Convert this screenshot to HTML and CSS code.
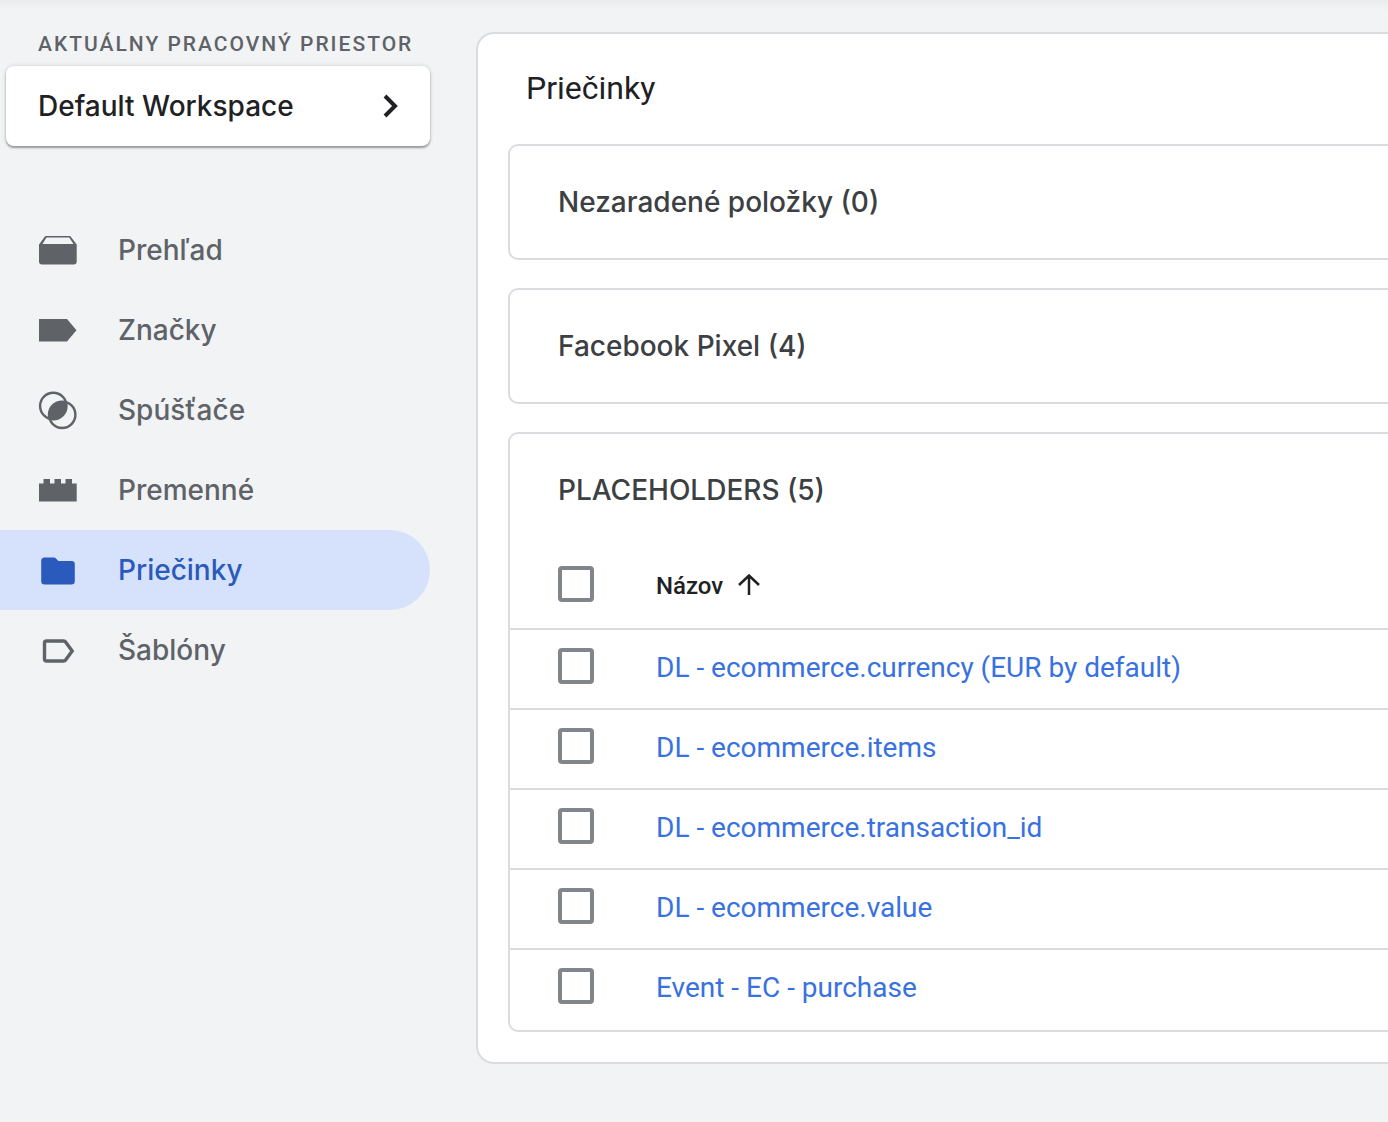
FILE: index.html
```html
<!DOCTYPE html>
<html lang="sk">
<head>
<meta charset="utf-8">
<meta name="viewport" content="width=device-width, initial-scale=1">
<title>Priečinky</title>
<link rel="stylesheet" href="styles.css">
</head>
<body>
<div class="app">
  <aside class="sidebar">
    <p class="caption">Aktuálny pracovný priestor</p>
    <button class="workspace" type="button">
      <span>Default Workspace</span>
      <svg class="chevron" viewBox="0 0 16 24" aria-hidden="true"><path d="M3 2l10 10L3 22" fill="none" stroke="currentColor" stroke-width="4"/></svg>
    </button>
    <nav class="nav">
      <a class="nav-item" href="#overview">
        <svg class="icon" viewBox="0 0 40 40" aria-hidden="true"><path d="M8 6h23.500q1 0 1.500 1L38.700 14.500V31.500q0 3-3 3H4q-3 0-3-3V14.500L6.500 7Q7 6 8 6zM8.500 7.500L4.500 14h31l-4.300-6.500z" fill="currentColor" fill-rule="evenodd"/></svg>
        <span>Prehľad</span>
      </a>
      <a class="nav-item" href="#tags">
        <svg class="icon" viewBox="0 0 40 40" aria-hidden="true"><path d="M1 9h28l9.500 11.300L29 31.500H1z" fill="currentColor"/></svg>
        <span>Značky</span>
      </a>
      <a class="nav-item" href="#triggers">
        <svg class="icon" viewBox="0 0 40 40" aria-hidden="true"><g fill="none" stroke="currentColor" stroke-width="2.400"><circle cx="15.300" cy="16" r="13.200"/><circle cx="24.200" cy="24.800" r="13.200"/></g><path d="M28.300 11.800A14 14 0 0 1 11.300 29.200A14 14 0 0 1 28.300 11.800z" fill="currentColor"/></svg>
        <span>Spúšťače</span>
      </a>
      <a class="nav-item" href="#variables">
        <svg class="icon" viewBox="0 0 40 40" aria-hidden="true"><path d="M1 13.500h4.500V9h6.500v4.500h4.500V9h6.500v4.500h4.500V9H34v4.500h4.700v18H1z" fill="currentColor"/></svg>
        <span>Premenné</span>
      </a>
      <a class="nav-item nav-item-active" href="#folders" aria-current="page">
        <svg class="icon" viewBox="0 0 40 40" aria-hidden="true"><path d="M6.500 7.500H16q1 0 2 1l2.500 2.500H33.500q3.300 0 3.300 3.300V31q0 3.500-3.300 3.500H6.500Q3.200 34.500 3.200 31V11Q3.200 7.500 6.500 7.500z" fill="currentColor"/></svg>
        <span>Priečinky</span>
      </a>
      <a class="nav-item" href="#templates">
        <svg class="icon" viewBox="0 0 40 40" aria-hidden="true"><path d="M8.500 11h17q1.500 0 2.300 1.200L34.200 21l-6.400 8.800Q27 31 25.500 31h-17q-2 0-2-2V13q0-2 2-2z" fill="none" stroke="currentColor" stroke-width="3.400"/></svg>
        <span>Šablóny</span>
      </a>
    </nav>
  </aside>
  <main class="panel">
    <h1 class="title">Priečinky</h1>
    <div class="folders">
      <section class="folder"><h2 class="folder-name">Nezaradené položky (0)</h2></section>
      <section class="folder"><h2 class="folder-name">Facebook Pixel (4)</h2></section>
      <section class="folder folder-open">
        <h2 class="folder-name">PLACEHOLDERS (5)</h2>
        <table class="items">
          <thead>
            <tr>
              <th class="pick"><input class="check" type="checkbox" aria-label="Vybrať všetko"></th>
              <th class="name"><span class="sort">Názov
                <svg class="arrow" viewBox="0 0 24 24" aria-hidden="true"><path d="M12 21V1.500M2 11L12 1.500 22 11" fill="none" stroke="currentColor" stroke-width="2.500"/></svg></span></th>
            </tr>
          </thead>
          <tbody>
            <tr>
              <td class="pick"><input class="check" type="checkbox" aria-labelledby="item-1"></td>
              <td class="name"><a class="link" id="item-1" href="#currency">DL - ecommerce.currency (EUR by default)</a></td>
            </tr>
            <tr>
              <td class="pick"><input class="check" type="checkbox" aria-labelledby="item-2"></td>
              <td class="name"><a class="link" id="item-2" href="#items">DL - ecommerce.items</a></td>
            </tr>
            <tr>
              <td class="pick"><input class="check" type="checkbox" aria-labelledby="item-3"></td>
              <td class="name"><a class="link" id="item-3" href="#transaction">DL - ecommerce.transaction_id</a></td>
            </tr>
            <tr>
              <td class="pick"><input class="check" type="checkbox" aria-labelledby="item-4"></td>
              <td class="name"><a class="link" id="item-4" href="#value">DL - ecommerce.value</a></td>
            </tr>
            <tr>
              <td class="pick"><input class="check" type="checkbox" aria-labelledby="item-5"></td>
              <td class="name"><a class="link" id="item-5" href="#purchase">Event - EC - purchase</a></td>
            </tr>
          </tbody>
        </table>
      </section>
    </div>
  </main>
</div>
</body>
</html>
```
FILE: styles.css
```css
* {
  box-sizing: border-box;
}

body {
  margin: 0;
  min-height: 100vh;
  background: linear-gradient(#e9ebed, #f1f3f5 10px) no-repeat #f1f3f5;
  color: #202124;
  font-family: "Google Sans", Inter, Roboto, sans-serif;
  font-size: 28px;
  line-height: 40px;
}

.app {
  display: grid;
  grid-template-columns: 430px minmax(0, 1fr);
  column-gap: 46px;
  align-items: start;
  padding: 32px 0 58px;
}

.caption {
  margin: 0 0 10px;
  padding-left: 38px;
  color: #5f6368;
  font-family: Roboto, sans-serif;
  font-size: 21px;
  font-weight: 500;
  line-height: 24px;
  letter-spacing: 2px;
  text-transform: uppercase;
  white-space: nowrap;
}

.workspace {
  display: flex;
  align-items: center;
  justify-content: space-between;
  width: calc(100% - 6px);
  height: 80px;
  margin: 0 0 64px 6px;
  padding: 0 32px;
  border: 0;
  border-radius: 8px;
  background: #fff;
  box-shadow: 0 2px 2px rgba(60, 64, 67, 0.45), 0 0 4px rgba(60, 64, 67, 0.2);
  color: #202124;
  font: inherit;
  font-weight: 500;
}

.chevron {
  width: 16px;
  height: 24px;
}

.nav-item {
  display: flex;
  align-items: center;
  gap: 40px;
  height: 80px;
  padding-left: 38px;
  border-radius: 0 40px 40px 0;
  color: #5f6368;
  font-weight: 500;
  text-decoration: none;
}

.nav-item-active {
  background: #d6e2fb;
  color: #2a5abb;
}

.icon {
  width: 40px;
  height: 40px;
}

.panel {
  padding: 30px 0 30px 30px;
  border: 2px solid #dadce0;
  border-right: 0;
  border-radius: 18px 0 0 18px;
  background: #fff;
}

.title {
  margin: 0 0 32px 18px;
  font-family: "Google Sans", Roboto, sans-serif;
  font-size: 32px;
  font-weight: 400;
  line-height: 48px;
}

.folders {
  display: grid;
  gap: 28px;
}

.folder {
  border: 2px solid #dadce0;
  border-right: 0;
  border-radius: 10px 0 0 10px;
}

.folder-open {
  padding-bottom: 2px;
}

.folder-name {
  margin: 0;
  padding: 36px 48px;
  color: #3c4043;
  font-size: 28px;
  font-weight: 500;
  line-height: 40px;
}

.items {
  width: 100%;
  border-spacing: 0;
  font-family: Roboto, sans-serif;
  text-align: left;
}

.items th {
  padding: 20px 0 22px;
  font-size: 24px;
  font-weight: 500;
  vertical-align: top;
}

.items td {
  padding: 18px 0 20px;
  border-top: 2px solid #dadce0;
  vertical-align: top;
}

.items .pick {
  width: 146px;
  padding-left: 48px;
}

.check {
  display: block;
  width: 36px;
  height: 36px;
  margin: 0;
  border: 4px solid #80868b;
  border-radius: 4px;
  background: #fff;
  appearance: none;
}

.check:checked {
  background: #80868b;
}

.sort {
  display: flex;
  align-items: center;
  gap: 14px;
}

.arrow {
  width: 24px;
  height: 24px;
}

.link {
  color: #3871e0;
  text-decoration: none;
}
```
